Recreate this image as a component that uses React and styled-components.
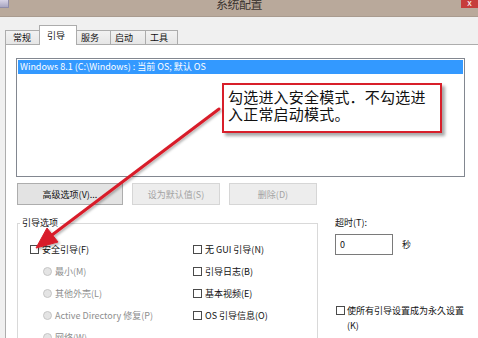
import React from 'react';
import styled, { createGlobalStyle } from 'styled-components';

const GlobalStyle = createGlobalStyle`
  html, body {
    margin: 0;
    padding: 0;
    width: 478px;
    height: 338px;
    overflow: hidden;
    background: #f0f0f0;
  }
  body {
    font-family: "Noto Sans CJK SC", "Noto Sans", sans-serif;
    font-size: 9px;
    color: #1a1a1a;
  }
`;

const Window = styled.div`
  position: relative;
  width: 478px;
  height: 338px;
  overflow: hidden;
  display: flex;
  flex-direction: column;
  background: #f0f0f0;
`;

const TitleBar = styled.div`
  display: grid;
  grid-template-columns: 1fr auto 1fr;
  height: 16px;
  background: #b9a99b;
  border-bottom: 1px solid #a99b8f;
  flex-shrink: 0;
`;

const AppIcon = styled.div`
  width: 8px;
  height: 7px;
  background: linear-gradient(#d8d4e6, #a9a6c2);
  border-right: 1px solid #8f8ca8;
  border-bottom: 1px solid #8f8ca8;
`;

const TitleText = styled.div`
  font-size: 12px;
  line-height: 12px;
  margin-top: -2px;
  color: #3b342f;
  letter-spacing: -0.5px;
`;

const CloseButton = styled.div`
  justify-self: end;
  width: 17px;
  height: 8px;
  background: #c63d3c;
  color: #fff;
  font-size: 9px;
  line-height: 6px;
  text-align: center;
  overflow: hidden;
`;

const Body = styled.div`
  flex: 1;
  display: flex;
  flex-direction: column;
  padding: 8px 0 0 5px;
  min-height: 0;
`;

const TabStrip = styled.div`
  display: flex;
  align-items: flex-end;
  height: 20px;
  margin-bottom: -1px;
  position: relative;
  z-index: 1;
`;

const Tab = styled.div`
  box-sizing: border-box;
  width: ${p => p.$w}px;
  height: ${p => (p.$active ? 20 : 15)}px;
  padding-left: ${p => p.$pad}px;
  border: 1px solid #acacac;
  border-bottom: ${p => (p.$active ? 'none' : '1px solid #acacac')};
  margin-left: -1px;
  background: ${p => (p.$active ? '#ffffff' : 'linear-gradient(#f2f2f2, #e6e6e6)')};
  font-size: 9px;
  line-height: ${p => (p.$active ? 19 : 13)}px;
  color: #111;
  &:first-child { margin-left: 0; }
`;

const Panel = styled.div`
  flex: 1;
  background: #fff;
  border: 1px solid #adadad;
  border-right: none;
  padding: 13px 0 0 10px;
`;

const ListBox = styled.div`
  box-sizing: border-box;
  width: 449px;
  height: 119px;
  border: 1px solid #828790;
  padding: 1px;
`;

const ListRow = styled.div`
  height: 14px;
  line-height: 14px;
  padding-left: 2px;
  background: #3399ff;
  color: #fff;
  font-size: 9px;
  white-space: nowrap;
`;

const ButtonRow = styled.div`
  display: flex;
  gap: 9px;
  margin-top: 6px;
  padding-left: 1px;
`;

const Btn = styled.div`
  box-sizing: border-box;
  width: ${p => p.$w}px;
  height: 22px;
  display: flex;
  align-items: center;
  justify-content: center;
  border: 1px solid ${p => (p.$disabled ? '#d6d6d6' : '#adadad')};
  background: ${p => (p.$disabled ? '#ededed' : '#e3e3e3')};
  color: ${p => (p.$disabled ? '#a3a3a3' : '#111')};
  font-size: 9px;
`;

const Lower = styled.div`
  display: grid;
  grid-template-columns: 301px 1fr;
  column-gap: 17px;
  margin-top: 12px;
  padding-left: 1px;
`;

const GroupBox = styled.fieldset`
  box-sizing: border-box;
  margin: 0;
  padding: 9px 0 0 0;
  min-width: 0;
  height: 150px;
  border: 1px solid #d9d9d9;
`;

const GroupLegend = styled.legend`
  margin-left: 2px;
  padding: 0 2px;
  font-size: 9px;
  line-height: 12px;
  color: #111;
`;

const OptionGrid = styled.div`
  display: grid;
  grid-template-columns: 163px 1fr;
  padding-left: 12px;
`;

const OptionColumn = styled.div`
  display: flex;
  flex-direction: column;
`;

const Option = styled.div`
  display: flex;
  align-items: center;
  gap: 3px;
  height: 22px;
  padding-left: ${p => p.$indent || 0}px;
  color: ${p => (p.$disabled ? '#8e8e8e' : '#111')};
  white-space: nowrap;
`;

const CheckBox = styled.span`
  box-sizing: border-box;
  flex-shrink: 0;
  width: 9px;
  height: 9px;
  border: 1px solid #4a4a4a;
  background: #fff;
`;

const Radio = styled.span`
  box-sizing: border-box;
  flex-shrink: 0;
  width: 9px;
  height: 9px;
  border-radius: 50%;
  border: 1px solid #c6c6c6;
  background: #e4e4e4;
`;

const SideColumn = styled.div`
  display: flex;
  flex-direction: column;
`;

const FieldLabel = styled.div`
  line-height: 12px;
  color: #111;
`;

const TimeoutRow = styled.div`
  display: flex;
  align-items: center;
  gap: 9px;
  margin-top: 5px;
`;

const TimeoutInput = styled.div`
  box-sizing: border-box;
  width: 58px;
  height: 21px;
  border: 1px solid #7a7a7a;
  background: #fff;
  padding-left: 4px;
  line-height: 19px;
  color: #111;
`;

const PermanentOption = styled.div`
  display: flex;
  align-items: flex-start;
  gap: 2px;
  margin-top: 48px;
  padding-left: 1px;
  color: #111;
  & > ${CheckBox} { margin-top: 3px; }
`;

const PermanentText = styled.div`
  width: 118px;
  line-height: 15px;
`;

const Callout = styled.div`
  position: absolute;
  left: 222px;
  top: 83px;
  box-sizing: border-box;
  width: 220px;
  height: 50px;
  border: 2px solid #d81f2a;
  background: #fff;
  box-shadow: 3px 3px 3px rgba(0, 0, 0, 0.35);
  padding: 3px 0 0 4px;
  font-size: 15px;
  line-height: 17px;
  color: #111;
  letter-spacing: 0.2px;
`;

const ArrowLayer = styled.svg`
  position: absolute;
  left: 0;
  top: 0;
  pointer-events: none;
`;

const tabs = [
  { label: '常规', w: 35, pad: 7 },
  { label: '引导', w: 38, pad: 7, active: true },
  { label: '服务', w: 35, pad: 4 },
  { label: '启动', w: 36, pad: 4 },
  { label: '工具', w: 33, pad: 4 },
];

export default function App() {
  return (
    <>
      <GlobalStyle />
      <Window>
        <TitleBar>
          <AppIcon />
          <TitleText>系统配置</TitleText>
          <CloseButton>x</CloseButton>
        </TitleBar>
        <Body>
          <TabStrip>
            {tabs.map(t => (
              <Tab key={t.label} $w={t.w} $pad={t.pad} $active={t.active}>
                {t.label}
              </Tab>
            ))}
          </TabStrip>
          <Panel>
            <ListBox>
              <ListRow>Windows 8.1 (C:\Windows) : 当前 OS; 默认 OS</ListRow>
            </ListBox>
            <ButtonRow>
              <Btn $w={106}>高级选项(V)...</Btn>
              <Btn $w={88} $disabled>设为默认值(S)</Btn>
              <Btn $w={88} $disabled>删除(D)</Btn>
            </ButtonRow>
            <Lower>
              <GroupBox>
                <GroupLegend>引导选项</GroupLegend>
                <OptionGrid>
                  <OptionColumn>
                    <Option><CheckBox />安全引导(F)</Option>
                    <Option $indent={13} $disabled><Radio />最小(M)</Option>
                    <Option $indent={13} $disabled><Radio />其他外壳(L)</Option>
                    <Option $indent={13} $disabled><Radio />Active Directory 修复(P)</Option>
                    <Option $indent={13} $disabled><Radio />网络(W)</Option>
                  </OptionColumn>
                  <OptionColumn>
                    <Option><CheckBox />无 GUI 引导(N)</Option>
                    <Option><CheckBox />引导日志(B)</Option>
                    <Option><CheckBox />基本视频(E)</Option>
                    <Option><CheckBox />OS 引导信息(O)</Option>
                  </OptionColumn>
                </OptionGrid>
              </GroupBox>
              <SideColumn>
                <FieldLabel>超时(T):</FieldLabel>
                <TimeoutRow>
                  <TimeoutInput>0</TimeoutInput>
                  <span>秒</span>
                </TimeoutRow>
                <PermanentOption>
                  <CheckBox />
                  <PermanentText>使所有引导设置成为永久设置(K)</PermanentText>
                </PermanentOption>
              </SideColumn>
            </Lower>
          </Panel>
        </Body>

        <Callout>
          勾选进入安全模式．不勾选进
          <br />
          入正常启动模式。
        </Callout>

        <ArrowLayer width="478" height="338" viewBox="0 0 478 338">
          <defs>
            <filter id="arrowShadow" x="-10%" y="-10%" width="130%" height="130%">
              <feDropShadow dx="1.5" dy="1.5" stdDeviation="1" floodColor="#000" floodOpacity="0.3" />
            </filter>
          </defs>
          <g filter="url(#arrowShadow)" fill="#d81f2a" stroke="#d81f2a">
            <line x1="219" y1="109" x2="52" y2="235" strokeWidth="3" strokeLinecap="round" />
            <polygon points="36,248 47,228 58,242" strokeWidth="1" strokeLinejoin="round" />
          </g>
        </ArrowLayer>
      </Window>
    </>
  );
}
